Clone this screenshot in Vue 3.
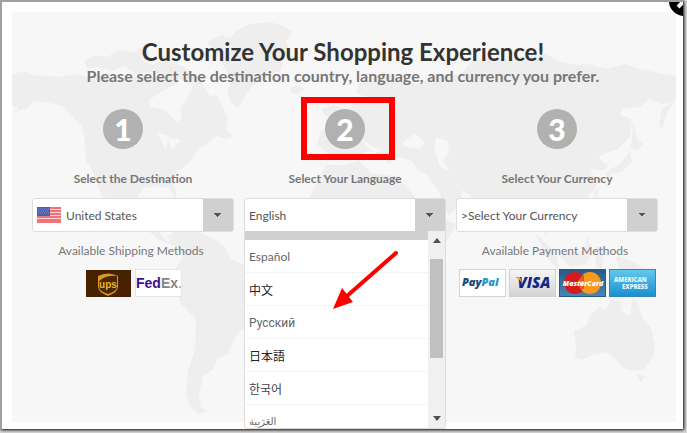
<template>
  <div class="page">
    <main class="dialog">
      <button class="close" type="button" aria-label="Close">
        <svg viewBox="0 0 30 30" width="30" height="30">
          <path d="M9 10L20 21M20 10L9 21" stroke="#fff" stroke-width="4" />
        </svg>
      </button>

      <div class="panel">
        <svg class="map" viewBox="12 12 664 410" preserveAspectRatio="xMidYMid slice" aria-hidden="true">
          <g fill="#eeeeee">
            <path d="M12 74L26 71L32 75L60 77L76 74L88 77L100 75L118 80L140 75L160 78L174 72L180 82L168 88L156 95L149 100L151 107L165 110L176 122L182 119L180 108L187 98L194 84L205 88L210 96L217 95L228 118L226 128L214 138L204 145L197 150L190 162L178 171L173 181L177 194L175 198L169 188L155 186L144 188L137 197L137 210L145 222L158 218L158 230L166 241L177 242L174 246L158 239L145 228L126 222L116 212L104 190L110 205L101 194L94 175L86 160L84 135L82 127L72 116L62 106L50 103L33 101L29 107L12 114L18 108L12 105Z" />
            <path d="M84 62L95 55L108 57L118 50L134 52L145 45L149 55L140 59L152 65L168 59L186 68L199 78L204 87L190 83L177 78L163 74L151 72L135 74L124 66L112 71L98 67L88 69Z" />
            <path d="M207 42L221 35L230 38L237 30L251 24L270 22L283 26L292 32L286 42L291 52L283 59L281 70L265 78L251 87L244 98L238 107L231 103L227 91L231 82L224 67L218 55Z" />
            <path d="M290 88L300 85L304 89L298 94L291 93ZM207 132L222 124L233 137L225 139ZM163 207L178 210L188 217L178 216Z" />
            <path d="M167 236L177 231L195 231L211 237L224 246L231 259L247 266L266 278L256 298L248 325L237 334L228 354L217 359L214 369L203 376L199 395L201 408L208 411L199 414L190 407L186 393L188 371L195 350L196 319L181 304L174 286L174 270L183 257Z" />
            <path d="M325 151L317 144L321 130L337 126L337 119L325 116L321 109L334 105L349 111L354 99L367 104L376 99L357 94L358 83L372 79L382 72L394 75L405 83L420 84L438 74L460 75L470 63L486 57L505 60L532 56L546 54L560 62L576 65L588 64L606 69L625 64L640 69L659 73L676 76L676 100L668 110L662 130L659 125L662 109L671 103L661 104L649 99L640 107L622 109L620 115L632 119L630 137L618 149L604 154L598 157L608 166L602 171L590 169L597 186L587 198L574 203L572 213L580 224L575 232L562 225L558 213L548 207L545 218L547 236L539 225L533 208L519 204L512 216L502 233L495 220L490 205L475 199L462 190L461 204L449 215L438 190L426 174L418 171L412 161L398 157L389 164L379 154L368 151L358 158L345 155L334 161Z" />
            <path d="M326 165L345 165L359 161L372 174L397 176L413 195L428 217L450 222L457 224L449 238L434 254L430 276L412 310L392 333L376 328L369 307L370 282L359 257L338 252L318 244L308 219L310 196L319 178Z" />
            <path d="M633 120L637 138L643 144L637 150L630 149L632 137ZM630 151L632 162L623 171L611 174L609 179L605 173L621 163ZM599 188L596 199L593 193ZM598 211L605 221L604 230L597 224Z" />
            <path d="M535 233L545 242L557 258L559 270L546 257ZM560 257L566 252L583 251L588 236L591 253L586 264L571 267ZM595 247L605 246L602 268L596 267ZM616 256L636 263L647 273L636 271L619 270ZM557 272L574 276L593 278L594 282L559 276Z" />
            <path d="M574 331L587 325L590 315L600 307L605 311L612 299L623 302L620 310L630 316L633 298L639 305L643 319L651 328L655 345L654 355L645 369L636 371L623 368L616 359L606 352L592 355L581 360L575 357L576 347ZM637 374L645 376L641 383Z" />
          </g>
          <path d="M402 144L414 133L425 142L420 149L407 147ZM436 137L448 141L449 154L443 160L450 171L440 167L434 148ZM360 139L382 151L374 153ZM157 132L168 136L166 151L162 140ZM167 137L181 140L172 150Z" fill="#f7f7f7" />
        </svg>

        <header class="heading">
          <h1>Customize Your Shopping Experience!</h1>
          <p>Please select the destination country, language, and currency you prefer.</p>
        </header>

        <div class="steps">
          <section class="step step-destination">
            <div class="number">1</div>
            <label for="destination">Select the Destination</label>
            <div class="field has-flag">
              <svg class="flag" viewBox="0 0 24 16" width="24" height="16">
                <rect width="24" height="16" fill="#f5d7db" />
                <path d="M0 1H24M0 4H24M0 7H24M0 10H24M0 13H24M0 15H24" stroke="#f0525a" stroke-width="1.5" />
                <rect width="13" height="9" fill="#4d5fae" />
                <path d="M1 2H12M2 4H12M1 6H12" stroke="#8190cb" stroke-dasharray="1 1" />
              </svg>
              <select id="destination" v-model="destination">
                <option>United States</option>
              </select>
            </div>
            <p class="methods-title">Available Shipping Methods</p>
            <div class="methods">
              <svg class="card" viewBox="0 0 47 28" role="img" aria-label="UPS">
                <rect x="1" width="45" height="27" y="1" fill="#482100" />
                <path d="M13 7Q23 2 33 7V18Q33 23 23 27Q13 23 13 18Z" fill="#d99b22" />
                <path d="M14 12Q21 6 32 7V18Q32 22 23 25Q14 22 14 18Z" fill="#4b2702" />
                <text x="23" y="19" text-anchor="middle" class="logo ups">ups</text>
              </svg>
              <svg class="card" viewBox="0 0 47 28" role="img" aria-label="FedEx">
                <rect x="0.5" y="0.5" width="46" height="27" fill="#fff" stroke="#e6e6e6" />
                <text x="1" y="19" class="logo fedex"><tspan fill="#38128c">Fed</tspan><tspan fill="#858585">Ex</tspan></text>
                <circle cx="45" cy="18" r="1" fill="#aaa" />
              </svg>
            </div>
          </section>

          <section class="step">
            <div class="number marked">2</div>
            <label for="language">Select Your Language</label>
            <div class="field">
              <select id="language" v-model="language" class="open">
                <option>English</option>
                <option v-for="item in languages" :key="item.name">{{ item.name }}</option>
              </select>
              <div class="menu">
                <ul role="listbox" aria-label="Languages">
                  <li
                    v-for="item in languages"
                    :key="item.name"
                    role="option"
                    :class="item.type"
                    :lang="item.lang"
                    @click="language = item.name"
                  >{{ item.name }}</li>
                </ul>
                <div class="scrollbar">
                  <svg viewBox="0 0 8 5" width="8" height="5"><path d="M0 5L4 0L8 5Z" fill="#505050" /></svg>
                  <div class="thumb"></div>
                  <svg viewBox="0 0 8 5" width="8" height="5"><path d="M0 0L4 5L8 0Z" fill="#505050" /></svg>
                </div>
              </div>
              <svg class="pointer" viewBox="0 0 68 62" width="68" height="62">
                <path d="M65 4L16 47" stroke="#f00" stroke-width="4" stroke-linecap="round" />
                <path d="M2 60L11 39L22 53Z" fill="#f00" />
              </svg>
            </div>
          </section>

          <section class="step">
            <div class="number">3</div>
            <label for="currency">Select Your Currency</label>
            <div class="field">
              <select id="currency" v-model="currency">
                <option>&gt;Select Your Currency</option>
              </select>
            </div>
            <p class="methods-title">Available Payment Methods</p>
            <div class="methods">
              <svg class="card" viewBox="0 0 47 28" role="img" aria-label="PayPal">
                <rect x="0.5" y="0.5" width="46" height="27" fill="#fff" stroke="#d5d5d5" />
                <text x="3" y="17" class="logo paypal"><tspan fill="#18487d">Pay</tspan><tspan fill="#2395d0">Pal</tspan></text>
              </svg>
              <svg class="card" viewBox="0 0 47 28" role="img" aria-label="Visa">
                <defs>
                  <linearGradient id="silver" x2="0" y2="1"><stop stop-color="#f6f6f6" /><stop offset="1" stop-color="#d3d3d3" /></linearGradient>
                </defs>
                <rect x="0.5" y="0.5" width="46" height="27" fill="url(#silver)" stroke="#d2d2d2" />
                <text x="25" y="19" text-anchor="middle" class="logo visa">VISA</text>
                <path d="M6 8H11L13 14Q10 10 6 8Z" fill="#eca02c" />
              </svg>
              <svg class="card" viewBox="0 0 47 28" role="img" aria-label="MasterCard">
                <defs>
                  <linearGradient id="navy" x2="0" y2="1"><stop stop-color="#265b87" /><stop offset="1" stop-color="#4b85b3" /></linearGradient>
                </defs>
                <rect x="0.5" y="0.5" width="46" height="27" fill="url(#navy)" stroke="#285b89" />
                <circle cx="16" cy="14" r="11" fill="#d41b20" />
                <circle cx="31" cy="14" r="11" fill="#f8981d" />
                <path d="M25 7H22M25 9H21M25 11H21M25 17H21M25 19H22" stroke="#d41b20" />
                <text x="24" y="17" text-anchor="middle" class="logo mastercard">MasterCard</text>
              </svg>
              <svg class="card" viewBox="0 0 47 28" role="img" aria-label="American Express">
                <defs>
                  <linearGradient id="sky" x2="0" y2="1"><stop stop-color="#65c8ef" /><stop offset="1" stop-color="#198fce" /></linearGradient>
                </defs>
                <rect x="0.5" y="0.5" width="46" height="27" fill="url(#sky)" stroke="#3087bb" />
                <text x="5" y="13" class="logo amex">AMERICAN</text>
                <text x="13" y="20" class="logo amex">EXPRESS</text>
              </svg>
            </div>
          </section>
        </div>
      </div>
    </main>
  </div>
</template>

<script setup>
import { ref } from 'vue'

const destination = ref('United States')
const language = ref('English')
const currency = ref('>Select Your Currency')

const languages = [
  { name: 'Español', lang: 'es', type: 'latin' },
  { name: '中文', lang: 'zh', type: 'han' },
  { name: 'Русский', lang: 'ru', type: 'cyrillic' },
  { name: '日本語', lang: 'ja', type: 'han' },
  { name: '한국어', lang: 'ko', type: 'hangul' },
  { name: 'العَرَبِية', lang: 'ar', type: 'arabic' }
]
</script>

<style>
body {
  background: #d8d8d8;
}
</style>

<style scoped>
* {
  box-sizing: border-box;
}

.page {
  display: flex;
  min-height: 100vh;
  padding: 0 4px 4px 0;
  font-family: Lato, "Noto Sans CJK SC", sans-serif;
  color: #777;
  overflow: hidden;
}

.dialog {
  position: relative;
  flex: 1;
  display: flex;
  padding: 10px 7px 7px 10px;
  background: #fff;
  border-top: 2px solid #a0a0a0;
  border-left: 2px solid #a0a0a0;
  box-shadow: 1px 1px 3px #000;
  overflow: hidden;
}

.close {
  position: absolute;
  z-index: 2;
  top: -16px;
  right: -16px;
  width: 30px;
  height: 30px;
  padding: 0;
  border: none;
  border-radius: 50%;
  background: #000;
  cursor: pointer;
}

.close svg {
  display: block;
}

.panel {
  position: relative;
  flex: 1;
  padding: 24px 18px 0 20px;
  background: #f7f7f7;
}

.map {
  position: absolute;
  inset: 0;
  width: 100%;
  height: 100%;
}

.heading {
  position: relative;
  padding-right: 4px;
  text-align: center;
}

h1 {
  margin: 0;
  font-size: 24px;
  line-height: 32px;
  font-weight: bold;
  color: #333;
}

.heading p {
  margin: 0;
  font-size: 16px;
  line-height: 16px;
  font-weight: bold;
}

.steps {
  position: relative;
  display: grid;
  grid-template-columns: repeat(3, 1fr);
  gap: 10px;
  margin-top: 25px;
}

.step {
  display: flex;
  flex-direction: column;
  align-items: center;
}

.number {
  position: relative;
  width: 40px;
  height: 40px;
  border-radius: 50%;
  background: #b1b1b1;
  color: #fff;
  font-size: 30px;
  line-height: 40px;
  font-weight: 900;
  text-align: center;
}

.step-destination .number {
  margin-right: 20px;
}

.marked::after {
  content: "";
  position: absolute;
  inset: -12px -30px -11px -24px;
  border: 6px solid #f00;
}

label {
  margin: 20px 0 9px;
  font-size: 12px;
  line-height: 20px;
  font-weight: bold;
}

.field {
  position: relative;
  width: 100%;
}

select {
  display: block;
  width: 100%;
  height: 34px;
  padding: 0 36px 0 4px;
  appearance: none;
  border: 1px solid #ddd;
  border-radius: 3px;
  background:
    linear-gradient(to bottom right, #555 50%, transparent 50%) right 11px center / 4px 4px no-repeat,
    linear-gradient(to bottom left, #555 50%, transparent 50%) right 15px center / 4px 4px no-repeat,
    linear-gradient(#d0d0d0, #d0d0d0) right / 30px 100% no-repeat,
    #fff;
  color: #555;
  font-family: inherit;
  font-size: 12px;
}

select.open {
  border-radius: 3px 3px 0 0;
}

.flag {
  position: absolute;
  top: 9px;
  left: 5px;
}

.has-flag select {
  padding-left: 33px;
}

.menu {
  position: absolute;
  top: 33px;
  left: 0;
  right: 0;
  display: flex;
  height: 198px;
  border: 1px solid #ddd;
  border-top: none;
  border-radius: 0 0 3px 3px;
  background: #fff;
  overflow: hidden;
}

.menu ul {
  flex: 1;
  margin: 0;
  padding: 0;
  border-top: 9px solid #d0d0d0;
  list-style: none;
}

.menu li {
  height: 33px;
  padding-left: 4px;
  border-bottom: 1px solid #f5f5f5;
  color: #666;
  font-size: 12px;
  line-height: 34px;
  cursor: pointer;
}

.menu .cyrillic {
  font-family: Roboto, sans-serif;
}

.menu .han,
.menu .hangul {
  color: #222;
  font-family: "Noto Sans CJK JP", sans-serif;
}

.menu .hangul {
  color: #444;
  font-family: "Noto Sans CJK KR", sans-serif;
}

.menu .arabic {
  font-family: "DejaVu Sans", sans-serif;
  font-size: 10px;
}

.scrollbar {
  display: flex;
  flex-direction: column;
  align-items: center;
  justify-content: space-between;
  width: 17px;
  padding: 7px 0;
  background: #f0f0f0;
}

.thumb {
  width: 13px;
  height: 99px;
  margin: 16px 0 auto;
  background: #c0c0c0;
}

.pointer {
  position: absolute;
  top: 51px;
  left: 87px;
}

.methods-title {
  margin: 9px 0 8px;
  padding-right: 4px;
  font-size: 12px;
  line-height: 20px;
}

.methods {
  display: flex;
  gap: 3px;
}

.card {
  width: 47px;
  height: 28px;
}

.logo {
  font-family: "Open Sans", sans-serif;
  font-weight: 800;
}

.ups {
  font-family: "Liberation Sans", sans-serif;
  font-size: 10px;
  font-weight: 700;
  fill: #edb52c;
}

.fedex {
  font-family: "Liberation Sans", sans-serif;
  font-size: 14px;
  font-weight: 700;
}

.paypal {
  font-size: 11px;
  font-style: italic;
}

.visa {
  font-size: 15px;
  font-style: italic;
  fill: #15278b;
}

.mastercard {
  font-size: 7px;
  font-style: italic;
  fill: #fff;
}

.amex {
  font-size: 6px;
  fill: #e4f7ff;
}
</style>
